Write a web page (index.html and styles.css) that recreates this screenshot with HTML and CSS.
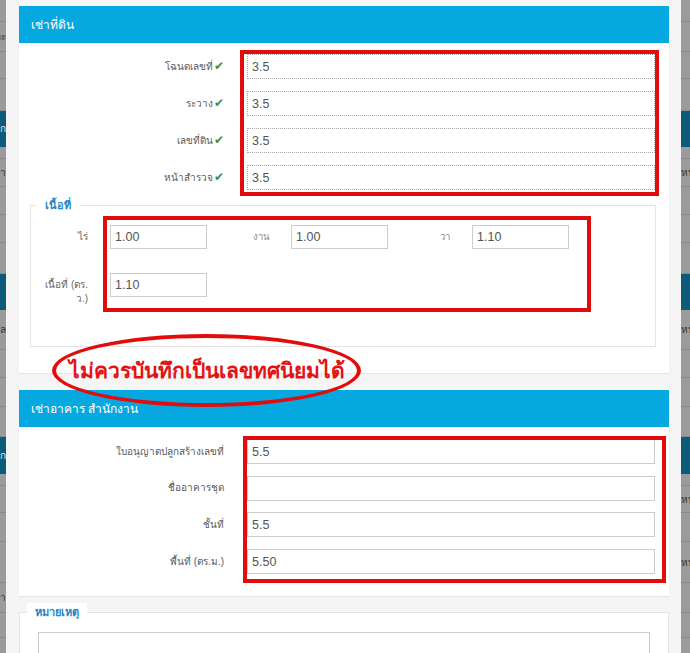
FILE: index.html
```html
<!DOCTYPE html>
<html lang="th">
<head>
<meta charset="utf-8">
<title>เช่าที่ดิน</title>
<link rel="stylesheet" href="styles.css">
</head>
<body>
<div class="screen">
  <div class="strip left">
    <div class="r h22"></div>
    <div class="r h30"><span class="tx">ละ</span></div>
    <div class="r h27"></div>
    <div class="r h32"></div>
    <div class="r t h36"><span class="tx">ก</span></div>
    <div class="r h12"></div>
    <div class="r h28"><span class="tx">อา</span></div>
    <div class="r h28"></div>
    <div class="r h28"></div>
    <div class="r h31"></div>
    <div class="r t h36"></div>
    <div class="r h40"><span class="tx">กล</span></div>
    <div class="r h28"></div>
    <div class="r h29"></div>
    <div class="r h30"></div>
    <div class="r t h37"><span class="tx">ก</span></div>
    <div class="r h12"></div>
    <div class="r h27"></div>
    <div class="r h29"></div>
    <div class="r h41"></div>
    <div class="r h30"><span class="tx">อา</span></div>
    <div class="r h25"></div>
    <div class="r h30"></div>
  </div>

  <main class="modal">
    <section class="panel p1">
      <div class="panel-head">เช่าที่ดิน</div>
      <div class="panel-body">
        <div class="rows dot">
          <div class="frow"><label>โฉนดเลขที่<span class="ok">✔</span></label><div class="inp">3.5</div></div>
          <div class="frow"><label>ระวาง<span class="ok">✔</span></label><div class="inp">3.5</div></div>
          <div class="frow"><label>เลขที่ดิน<span class="ok">✔</span></label><div class="inp">3.5</div></div>
          <div class="frow"><label>หน้าสำรวจ<span class="ok">✔</span></label><div class="inp">3.5</div></div>
        </div>
        <fieldset class="area">
          <legend>เนื้อที่</legend>
          <div class="area-grid">
            <div class="fld"><label>ไร่</label><div class="inp sm">1.00</div></div>
            <div class="fld"><label class="lt">งาน</label><div class="inp sm">1.00</div></div>
            <div class="fld"><label class="lt">วา</label><div class="inp sm">1.10</div></div>
            <div class="fld"><label class="wide">เนื้อที่ (ตร.<br>ว.)</label><div class="inp sm">1.10</div></div>
          </div>
        </fieldset>
      </div>
    </section>

    <section class="panel p2">
      <div class="panel-head">เช่าอาคาร สำนักงาน</div>
      <div class="panel-body">
        <div class="rows">
          <div class="frow"><label>ใบอนุญาตปลูกสร้างเลขที่</label><div class="inp">5.5</div></div>
          <div class="frow"><label>ชื่ออาคารชุด</label><div class="inp"></div></div>
          <div class="frow"><label>ชั้นที่</label><div class="inp">5.5</div></div>
          <div class="frow"><label>พื้นที่ (ตร.ม.)</label><div class="inp">5.50</div></div>
        </div>
      </div>
    </section>

    <fieldset class="note">
      <legend>หมายเหตุ</legend>
      <div class="textarea"></div>
    </fieldset>
  </main>

  <div class="strip right">
    <div class="r h22"></div>
    <div class="r h30"></div>
    <div class="r h27"></div>
    <div class="r h32"></div>
    <div class="r t h36"></div>
    <div class="r h12"></div>
    <div class="r h28"><span class="tx">หนา</span></div>
    <div class="r h28"></div>
    <div class="r h28"></div>
    <div class="r h31"></div>
    <div class="r t h36"></div>
    <div class="r h40"><span class="tx">หนา</span></div>
    <div class="r h28"></div>
    <div class="r h29"></div>
    <div class="r h30"></div>
    <div class="r t h37"></div>
    <div class="r h12"></div>
    <div class="r h27"><span class="tx">หนา</span></div>
    <div class="r h29"></div>
    <div class="r h41"><span class="tx">หนา</span></div>
    <div class="r h30"></div>
    <div class="r h25"></div>
    <div class="r h30"></div>
  </div>
</div>

<div class="annot">
  <div class="mark m1"></div>
  <div class="mark m2"></div>
  <div class="mark m3"></div>
  <div class="oval"><span>ไม่ควรบันทึกเป็นเลขทศนิยมได้</span></div>
</div>
</body>
</html>
```

FILE: styles.css
```css
* { box-sizing: border-box; }
html, body { margin: 0; width: 690px; height: 653px; overflow: hidden; }
body {
  font-family: "Liberation Sans", Tahoma, sans-serif;
  background: #f5f5f5;
  position: relative;
}
.screen { display: flex; width: 690px; height: 653px; }

/* backdrop strips */
.strip { flex: none; width: 6px; background: #9b9b9b; display: flex; flex-direction: column; overflow: hidden; }
.strip.right { width: 9px; }
.strip .r { flex: none; border-bottom: 1px solid #8a8a8a; display: flex; align-items: center; font-size: 10px; color: #333; white-space: nowrap; }
.strip.left .r { justify-content: flex-end; }
.strip .t { background: #0d5b7b; color: #dfe9ee; border-bottom-color: #0d5b7b; }
.h12 { height: 12px; } .h22 { height: 22px; } .h25 { height: 25px; } .h27 { height: 27px; }
.h28 { height: 28px; } .h29 { height: 29px; } .h30 { height: 30px; } .h31 { height: 31px; }
.h32 { height: 32px; } .h36 { height: 36px; } .h37 { height: 37px; } .h40 { height: 40px; } .h41 { height: 41px; }

/* modal */
.modal { flex: none; width: 675px; background: #f5f5f5; padding: 6px 12px 0 13px; display: flex; flex-direction: column; overflow: hidden; }
.panel { flex: none; background: #fff; box-shadow: 0 1px 1px rgba(0,0,0,0.06); }
.panel-head { height: 37px; background: #05a9e0; color: #fff; font-size: 12px; padding-left: 12px; display: flex; align-items: center; }
.p1 .panel-body { padding: 11px 14px 26px 0; }
.p2 { margin-top: 17px; }
.p2 .panel-body { padding: 12px 14px 22px 0; }

.rows { display: flex; flex-direction: column; gap: 12px; }
.p2 .rows { gap: 11.7px; }
.frow { display: grid; grid-template-columns: 205px 1fr; column-gap: 23px; align-items: center; }
label { font-size: 10px; color: #5a5a5a; text-align: right; line-height: 14px; }
.ok { color: #3f8f3f; font-size: 12px; margin-left: 1px; }
.inp { height: 25px; border: 1px solid #cccccc; font-size: 12.5px; color: #555; padding-left: 4px; display: flex; align-items: center; background: #fff; }
.dot .inp { border: 1px dotted #a5a5a5; }

/* fieldsets */
fieldset { border: 1px solid #e4e4e4; padding: 0; margin: 0; min-width: 0; }
legend { font-size: 11px; font-weight: bold; line-height: 18px; color: #2a85c8; background: #fff; }
.area { margin: 6px -1px 0 11px; }
.area legend { padding: 0 9px; margin-left: 5px; }
.area-grid { display: grid; grid-template-columns: repeat(3, 167px); grid-auto-rows: 24px; column-gap: 14px; row-gap: 24px; padding: 11px 0 49px 9px; }
.fld { display: flex; align-items: flex-start; height: 24px; }
.fld label { width: 48px; margin-right: 22px; padding-top: 5px; flex: none; color: #666; white-space: nowrap; }
.fld label.wide { width: 64px; margin-left: -16px; }
.fld label.lt { color: #888; font-size: 9.5px; }
.inp.sm { width: 97px; height: 24px; flex: none; }

.note { flex: none; margin-top: 7px; background: #fff; }
.note legend { padding: 0 8px; margin-left: 7px; }
.textarea { height: 80px; margin: 11px 18px 0 18px; border: 1px solid #cccccc; }

/* annotation overlay */
.annot { position: absolute; inset: 0; pointer-events: none; }
.mark { position: absolute; border: 4px solid #e20c0c; }
.m1 { left: 240px; top: 50px; width: 419px; height: 146px; }
.m2 { left: 103px; top: 216px; width: 488px; height: 96px; }
.m3 { left: 243px; top: 436px; width: 423px; height: 147px; }
.oval { position: absolute; left: 52px; top: 334px; width: 309px; height: 73px; border: 4px solid #e20c0c; border-radius: 50%; display: flex; align-items: center; justify-content: center; }
.oval span { font-size: 21px; font-weight: bold; color: #e31313; white-space: nowrap; }
```
